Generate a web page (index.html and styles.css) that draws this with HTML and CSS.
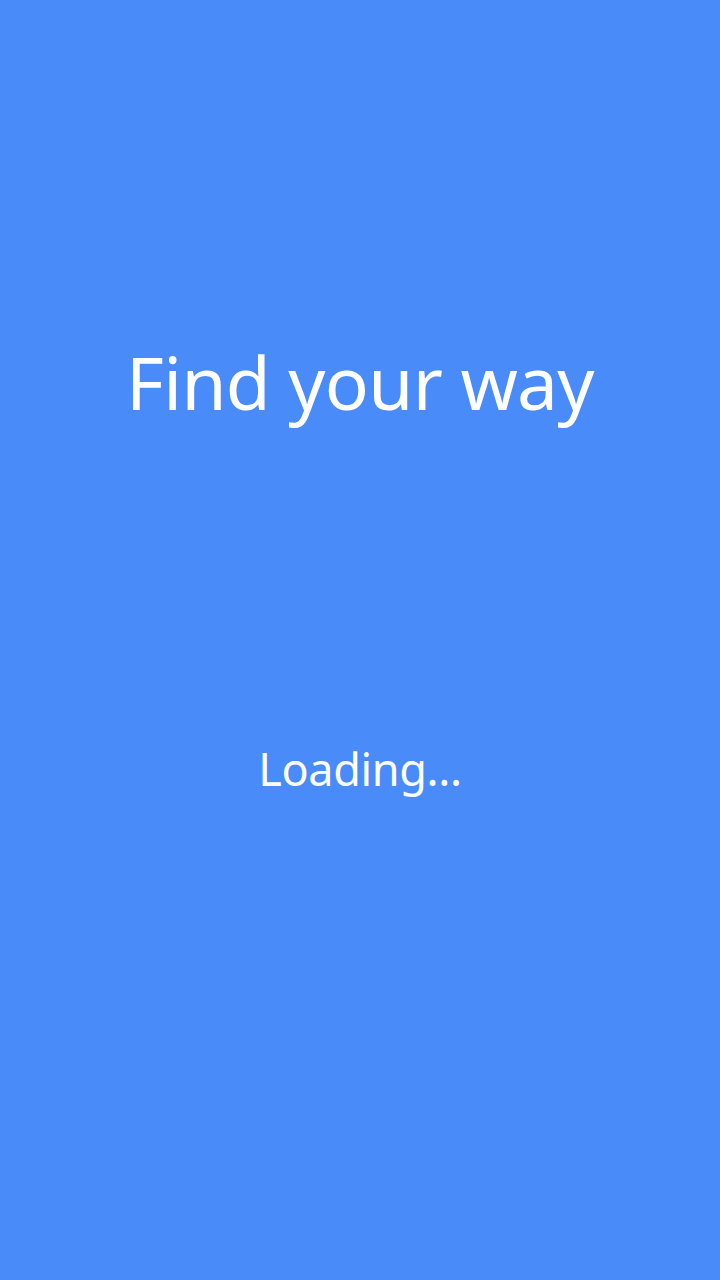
FILE: index.html
```html
<!DOCTYPE html>
<html>
<head>
<meta charset="utf-8">
<link rel="stylesheet" href="styles.css">
</head>
<body>
<main class="splash">
  <h1 class="title">Find your way</h1>
  <p class="loading">Loading...</p>
</main>
</body>
</html>
```
FILE: styles.css
```css
html, body {
  margin: 0;
  padding: 0;
  height: 100%;
  background: #4a8bfa;
}
.splash {
  min-height: 1280px;
  display: flex;
  flex-direction: column;
  align-items: center;
  padding-top: 345px;
  box-sizing: border-box;
  font-family: "Noto Sans", "Open Sans", sans-serif;
  color: #ffffff;
}
.title {
  margin: 0;
  font-size: 73px;
  font-weight: 400;
  line-height: 1;
  letter-spacing: -0.7px;
}
.loading {
  margin: 328px 0 0;
  font-size: 45px;
  line-height: 1;
  letter-spacing: -0.35px;
}
```
